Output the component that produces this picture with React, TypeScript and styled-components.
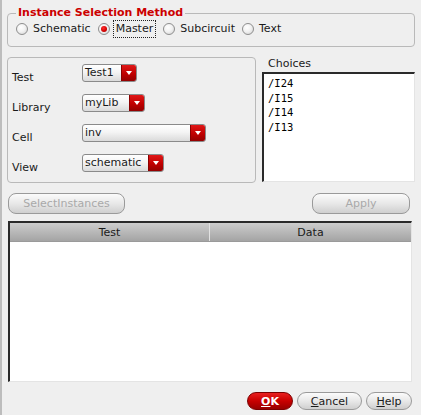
import React from "react";
import styled, { createGlobalStyle, css } from "styled-components";

const Global = createGlobalStyle`
  html, body { margin: 0; padding: 0; background: #efefef; }
  body { font-family: "DejaVu Sans", "Noto Sans", sans-serif; font-size: 11px; color: #1a1a1a; }
  * { box-sizing: border-box; }
`;

const Window = styled.div`
  width: 421px;
  height: 415px;
  overflow: hidden;
  border-left: 2px solid #bdbdbd;
  padding: 0 6px 0 5px;
  display: flex;
  flex-direction: column;
  background: #efefef;
`;

const MethodGroup = styled.fieldset`
  margin: 6px 0 0 0;
  padding: 0 8px 8px 8px;
  border: 1px solid #b9b9b9;
  border-radius: 4px;
  display: flex;
  gap: 7px;
  align-items: center;
  min-width: 0;
`;

const Legend = styled.legend`
  padding: 0 2px;
  color: #cc0000;
  font-weight: bold;
  font-size: 11px;
  line-height: 14px;
`;

const RadioOption = styled.label<{ $focused?: boolean }>`
  display: flex;
  align-items: center;
  gap: ${(p) => (p.$focused ? 3 : 5)}px;
  height: 18px;
`;

const RadioText = styled.span<{ $focused?: boolean }>`
  line-height: 14px;
  ${(p) =>
    p.$focused &&
    css`
      padding: 1px 2px;
      border: 1px dotted #222;
    `}
`;

const RadioCircle = styled.span<{ $checked?: boolean }>`
  width: 12px;
  height: 12px;
  border-radius: 50%;
  border: 1px solid #8e8e8e;
  background: radial-gradient(circle at 40% 35%, #ffffff 0%, #f2f2f2 45%, #cfcfcf 100%);
  display: flex;
  align-items: center;
  justify-content: center;
  &::after {
    content: "";
    width: 6px;
    height: 6px;
    border-radius: 50%;
    background: radial-gradient(circle at 40% 35%, #ff3030 0%, #d00000 60%, #900000 100%);
    display: ${(p) => (p.$checked ? "block" : "none")};
  }
`;

const Middle = styled.div`
  display: flex;
  gap: 6px;
  margin-top: 10px;
`;

const FormBox = styled.div`
  width: 249px;
  height: 126px;
  border: 1px solid #b9b9b9;
  border-radius: 4px;
  padding: 6px 4px 0 4px;
  display: grid;
  grid-template-columns: 70px auto;
  grid-auto-rows: 18px;
  row-gap: 12px;
  align-items: start;
`;

const FieldLabel = styled.span`
  line-height: 14px;
  padding-top: 7px;
  white-space: nowrap;
`;

const Combo = styled.div<{ $w: number }>`
  width: ${(p) => p.$w}px;
  height: 18px;
  border: 1px solid #8a8a8a;
  border-radius: 3px;
  background: linear-gradient(#ffffff, #f4f4f4 45%, #dadada);
  display: flex;
  overflow: hidden;
`;

const ComboText = styled.span`
  flex: 1;
  padding-left: 2px;
  line-height: 15px;
`;

const ComboArrow = styled.span`
  width: 15px;
  background: linear-gradient(#e01818, #c00000 55%, #940000);
  border-left: 1px solid #8a0000;
  display: flex;
  align-items: center;
  justify-content: center;
  &::after {
    content: "";
    border-left: 3px solid transparent;
    border-right: 3px solid transparent;
    border-top: 4px solid #ffffff;
  }
`;

const ChoicesColumn = styled.div`
  flex: 1;
  display: flex;
  flex-direction: column;
`;

const ChoicesLabel = styled.span`
  line-height: 13px;
  padding-left: 6px;
  height: 15px;
`;

const ListBox = styled.div`
  height: 110px;
  background: #ffffff;
  border-top: 2px solid #2a2a2a;
  border-left: 2px solid #2a2a2a;
  border-right: 1px solid #e4e4e4;
  border-bottom: 1px solid #e4e4e4;
  padding: 2px 0 0 4px;
  display: flex;
  flex-direction: column;
`;

const ListItem = styled.span`
  font-family: "DejaVu Sans Mono", "Liberation Mono", monospace;
  font-size: 10.5px;
  line-height: 14.5px;
  color: #000;
`;

const ActionRow = styled.div`
  display: flex;
  justify-content: space-between;
  margin: 10px 5px 0 1px;
`;

const PillButton = styled.button<{ $w: number; $primary?: boolean; $disabled?: boolean }>`
  width: ${(p) => p.$w}px;
  height: 21px;
  border-radius: 8px;
  border: 1px solid #9a9a9a;
  background: linear-gradient(#fbfbfb, #e8e8e8 50%, #cfcfcf);
  font-family: inherit;
  font-size: 11px;
  padding: 0;
  color: ${(p) => (p.$disabled ? "#a9a9a9" : "#1a1a1a")};
  ${(p) =>
    p.$primary &&
    css`
      background: linear-gradient(#e82020, #c80000 50%, #980000);
      border-color: #7a0000;
      color: #ffffff;
      font-weight: bold;
    `}
`;

const Table = styled.div`
  margin: 7px 3px 0 1px;
  height: 161px;
  background: #ffffff;
  border-top: 2px solid #2a2a2a;
  border-left: 2px solid #2a2a2a;
  border-right: 1px solid #e4e4e4;
  border-bottom: 1px solid #e4e4e4;
  display: flex;
  flex-direction: column;
`;

const HeaderRow = styled.div`
  display: grid;
  grid-template-columns: 200px 1fr;
  height: 19px;
  background: linear-gradient(#cdcdcd, #b8b8b8 50%, #a4a4a4);
  border-bottom: 1px solid #9a9a9a;
`;

const HeaderCell = styled.div<{ $last?: boolean }>`
  display: flex;
  align-items: center;
  justify-content: center;
  border-right: ${(p) => (p.$last ? "none" : "1px solid #e2e2e2")};
`;

const Footer = styled.div`
  display: flex;
  justify-content: flex-end;
  gap: 4px;
  margin: 10px 3px 0 0;
`;

const FooterButton = styled(PillButton)`
  height: 18px;
  border-radius: 9px;
`;

const U = styled.span`
  text-decoration: underline;
`;

const methods = [
  { label: "Schematic", checked: false },
  { label: "Master", checked: true },
  { label: "Subcircuit", checked: false },
  { label: "Text", checked: false },
];

const fields = [
  { label: "Test", value: "Test1", w: 55 },
  { label: "Library", value: "myLib", w: 63 },
  { label: "Cell", value: "inv", w: 124 },
  { label: "View", value: "schematic", w: 82 },
];

const choices = ["/I24", "/I15", "/I14", "/I13"];

export default function App() {
  return (
    <>
      <Global />
      <Window>
        <MethodGroup>
          <Legend>Instance Selection Method</Legend>
          {methods.map((m) => (
            <RadioOption key={m.label} $focused={m.checked}>
              <RadioCircle $checked={m.checked} />
              <RadioText $focused={m.checked}>{m.label}</RadioText>
            </RadioOption>
          ))}
        </MethodGroup>
        <Middle>
          <FormBox>
            {fields.map((f) => (
              <React.Fragment key={f.label}>
                <FieldLabel>{f.label}</FieldLabel>
                <Combo $w={f.w}>
                  <ComboText>{f.value}</ComboText>
                  <ComboArrow />
                </Combo>
              </React.Fragment>
            ))}
          </FormBox>
          <ChoicesColumn>
            <ChoicesLabel>Choices</ChoicesLabel>
            <ListBox>
              {choices.map((c) => (
                <ListItem key={c}>{c}</ListItem>
              ))}
            </ListBox>
          </ChoicesColumn>
        </Middle>
        <ActionRow>
          <PillButton $w={117} $disabled>
            SelectInstances
          </PillButton>
          <PillButton $w={98} $disabled>
            Apply
          </PillButton>
        </ActionRow>
        <Table>
          <HeaderRow>
            <HeaderCell>Test</HeaderCell>
            <HeaderCell $last>Data</HeaderCell>
          </HeaderRow>
        </Table>
        <Footer>
          <FooterButton $w={46} $primary>
            <U>O</U>K
          </FooterButton>
          <FooterButton $w={65}>
            <U>C</U>ancel
          </FooterButton>
          <FooterButton $w={46}>
            <U>H</U>elp
          </FooterButton>
        </Footer>
      </Window>
    </>
  );
}
